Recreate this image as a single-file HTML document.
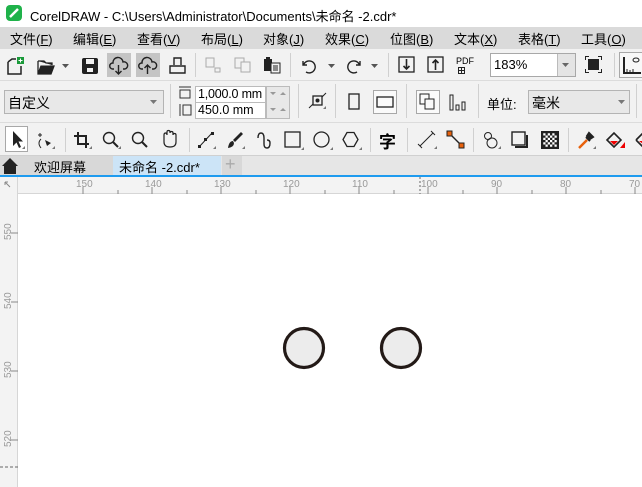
<!DOCTYPE html>
<html><head><meta charset="utf-8"><style>
*{margin:0;padding:0;box-sizing:border-box}
body{width:642px;height:487px;overflow:hidden;background:#fff;font-family:"Liberation Sans","Noto Sans CJK SC",sans-serif;font-size:13px;color:#000;position:relative}
.a{position:absolute}
.sep{position:absolute;width:1px;background:#d0d0d0}
.m{position:absolute;top:29px;font-size:13px}
svg{position:absolute;overflow:visible}
.hl{position:absolute;background:#c4c4c4}
.bx{position:absolute;border:1px solid #a8a8a8;background:#fff}
</style></head><body>
<!-- title -->
<div class="a" style="left:0;top:0;width:642px;height:27px;background:#fff"></div>
<svg style="left:6px;top:5px" width="16" height="16"><rect x="0" y="0" width="16" height="16" rx="4" fill="#1fb24a"/><path d="M4 12 L12 4" stroke="#fff" stroke-width="2.5"/></svg>
<div class="a" style="left:30px;top:6px;font-size:13px">CorelDRAW - C:\Users\Administrator\Documents\未命名 -2.cdr*</div>
<!-- menu -->
<div class="a" style="left:0;top:27px;width:642px;height:22px;background:#dadada"></div>
<div class="m" style="left:10px">文件(<u>F</u>)</div>
<div class="m" style="left:73px">编辑(<u>E</u>)</div>
<div class="m" style="left:137px">查看(<u>V</u>)</div>
<div class="m" style="left:201px">布局(<u>L</u>)</div>
<div class="m" style="left:263px">对象(<u>J</u>)</div>
<div class="m" style="left:325px">效果(<u>C</u>)</div>
<div class="m" style="left:390px">位图(<u>B</u>)</div>
<div class="m" style="left:454px">文本(<u>X</u>)</div>
<div class="m" style="left:518px">表格(<u>T</u>)</div>
<div class="m" style="left:581px">工具(<u>O</u>)</div>
<!-- toolbars bg -->
<div class="a" style="left:0;top:49px;width:642px;height:107px;background:#f2f2f2"></div>
<div class="a" style="left:0;top:80px;width:642px;height:1px;background:#dcdcdc"></div>
<div class="a" style="left:0;top:122px;width:642px;height:1px;background:#dcdcdc"></div>
<div class="a" style="left:0;top:155px;width:642px;height:1px;background:#d0d0d0"></div>
<!-- toolbar 1 -->
<div class="hl" style="left:107px;top:53px;width:24px;height:24px"></div>
<div class="hl" style="left:136px;top:53px;width:24px;height:24px"></div>
<svg style="left:7px;top:57px" width="18" height="18"><path d="M1 5 L5 2 H9 M1 5 V17 H14 V9" fill="none" stroke="#222" stroke-width="1.5"/><rect x="10" y="0" width="7" height="7" fill="#1a9a3a"/><path d="M13.5 1.5v4M11.5 3.5h4" stroke="#fff"/></svg>
<svg style="left:37px;top:59px" width="20" height="16"><path d="M1 2 H7 L9 4 H15 V6 M1 2 V15 H14 L17 7 H4 L1 15" fill="#222" stroke="#222" stroke-width="1.3"/><path d="M3 6 H13" stroke="#f2f2f2"/></svg>
<svg style="left:62px;top:64px" width="8" height="5"><path d="M0 0H7L3.5 4Z" fill="#555"/></svg>
<svg style="left:82px;top:58px" width="17" height="16"><rect x="0" y="0" width="16" height="16" rx="2" fill="#222"/><rect x="4" y="1" width="8" height="5" fill="#f2f2f2"/><rect x="5" y="10" width="6" height="4" fill="#f2f2f2"/></svg>
<svg style="left:110px;top:57px" width="18" height="18"><path d="M4 12 H2.5 A3 3 0 0 1 3 6 A5 5 0 0 1 13 5 A3.5 3.5 0 0 1 15 12 H13" fill="none" stroke="#222" stroke-width="1.4"/><path d="M8.5 8 V17 M5.5 14 L8.5 17 L11.5 14" fill="none" stroke="#222" stroke-width="1.4"/></svg>
<svg style="left:139px;top:57px" width="18" height="18"><path d="M4 12 H2.5 A3 3 0 0 1 3 6 A5 5 0 0 1 13 5 A3.5 3.5 0 0 1 15 12 H13" fill="none" stroke="#222" stroke-width="1.4"/><path d="M8.5 17 V8 M5.5 11 L8.5 8 L11.5 11" fill="none" stroke="#222" stroke-width="1.4"/></svg>
<svg style="left:169px;top:57px" width="18" height="18"><path d="M5 8 V1 H12 V8 M1 16 V9 H16 V16 Z" fill="none" stroke="#222" stroke-width="1.4"/></svg>
<div class="sep" style="left:195px;top:53px;height:24px"></div>
<svg style="left:205px;top:57px" width="16" height="16"><rect x="1" y="1" width="8" height="9" fill="none" stroke="#aaa"/><rect x="10" y="11" width="5" height="4" fill="none" stroke="#aaa"/></svg>
<svg style="left:234px;top:57px" width="18" height="16"><rect x="1" y="1" width="9" height="10" fill="none" stroke="#aaa"/><rect x="7" y="5" width="9" height="10" fill="#f2f2f2" stroke="#aaa"/></svg>
<svg style="left:263px;top:56px" width="18" height="18"><rect x="1" y="3" width="8" height="12" fill="#222"/><rect x="3" y="1" width="4" height="3" fill="#222"/><rect x="8" y="7" width="9" height="10" fill="#f2f2f2" stroke="#222"/><path d="M10 10h5M10 12h5M10 14h5" stroke="#222"/></svg>
<div class="sep" style="left:290px;top:53px;height:24px"></div>
<svg style="left:300px;top:57px" width="18" height="18"><path d="M3 4 V8 H7 M3.5 8 A6 6 0 1 1 6 15" fill="none" stroke="#222" stroke-width="1.4"/></svg>
<svg style="left:328px;top:64px" width="8" height="5"><path d="M0 0H7L3.5 4Z" fill="#555"/></svg>
<svg style="left:345px;top:57px" width="18" height="18"><path d="M15 4 V8 H11 M14.5 8 A6 6 0 1 0 12 15" fill="none" stroke="#222" stroke-width="1.4"/></svg>
<svg style="left:371px;top:64px" width="8" height="5"><path d="M0 0H7L3.5 4Z" fill="#555"/></svg>
<div class="sep" style="left:388px;top:53px;height:24px"></div>
<svg style="left:398px;top:56px" width="18" height="18"><rect x="1" y="1" width="15" height="15" fill="none" stroke="#222" stroke-width="1.3"/><path d="M8.5 3V13M5.5 10L8.5 13L11.5 10" fill="none" stroke="#222" stroke-width="1.6"/></svg>
<svg style="left:427px;top:56px" width="18" height="18"><rect x="1" y="1" width="15" height="15" fill="none" stroke="#222" stroke-width="1.3"/><path d="M8.5 14V4M5.5 7L8.5 4L11.5 7" fill="none" stroke="#222" stroke-width="1.6"/></svg>
<div class="a" style="left:456px;top:57px;font-size:9px;line-height:9px">PDF</div>
<svg style="left:458px;top:67px" width="8" height="8"><rect x="0.5" y="0.5" width="6" height="6" fill="none" stroke="#222"/><path d="M3.5 1v5M1 3.5h5" stroke="#222"/></svg>
<div class="bx" style="left:490px;top:53px;width:86px;height:24px"></div>
<div class="a" style="left:557px;top:54px;width:18px;height:22px;background:#e4e4e4;border-left:1px solid #bbb"></div>
<svg style="left:562px;top:63px" width="8" height="5"><path d="M0 0H7L3.5 4Z" fill="#666"/></svg>
<div class="a" style="left:494px;top:57px;font-size:13px">183%</div>
<svg style="left:585px;top:56px" width="18" height="18"><rect x="3" y="3" width="11" height="11" fill="#222"/><path d="M0.5 4V0.5H4M13 0.5H16.5V4M16.5 13V16.5H13M4 16.5H0.5V13" fill="none" stroke="#222"/></svg>
<div class="sep" style="left:614px;top:53px;height:24px"></div>
<div class="bx" style="left:619px;top:52px;width:26px;height:26px;background:#f8f8f8"></div>
<svg style="left:623px;top:56px" width="18" height="18"><path d="M1 1V17H18" fill="none" stroke="#222" stroke-width="2"/><path d="M4 16V13M7 16V14M10 16V13" stroke="#222"/><ellipse cx="13" cy="4" rx="3" ry="2" fill="none" stroke="#222"/></svg>
<!-- toolbar 2 -->
<div class="a" style="left:4px;top:90px;width:160px;height:24px;background:#e8e8e8;border:1px solid #b4b4b4"></div>
<div class="a" style="left:8px;top:93px;font-size:14px">自定义</div>
<svg style="left:150px;top:100px" width="8" height="5"><path d="M0 0H7L3.5 4Z" fill="#777"/></svg>
<div class="sep" style="left:170px;top:84px;height:34px"></div>
<svg style="left:178px;top:86px" width="14" height="32"><path d="M1 1H13M2 4H12V12H2Z" fill="none" stroke="#333"/><path d="M2 18V30M5 19H13V29H5Z" fill="none" stroke="#333"/></svg>
<div class="bx" style="left:195px;top:86px;width:71px;height:17px;border-color:#bbb"></div>
<div class="bx" style="left:195px;top:102px;width:71px;height:17px;border-color:#bbb"></div>
<div class="a" style="left:266px;top:86px;width:24px;height:33px;background:#e8e8e8;border:1px solid #bbb"></div>
<div class="a" style="left:198px;top:87px;font-size:12.5px;letter-spacing:-0.2px">1,000.0 mm</div>
<div class="a" style="left:198px;top:103px;font-size:12.5px">450.0 mm</div>
<svg style="left:270px;top:92px" width="20" height="24"><path d="M0 0H6L3 3Z M10 3H16L13 0Z M0 16H6L3 19Z M10 19H16L13 16Z" fill="#999"/></svg>
<div class="sep" style="left:298px;top:84px;height:34px"></div>
<svg style="left:309px;top:92px" width="20" height="20"><rect x="4" y="4" width="9" height="9" fill="none" stroke="#222" stroke-width="1.3"/><circle cx="8.5" cy="8.5" r="2" fill="#222"/><path d="M0 16L4 12M13 5L17 1" stroke="#222"/><path d="M14 17H17V14Z" fill="#777"/></svg>
<div class="sep" style="left:335px;top:84px;height:34px"></div>
<svg style="left:348px;top:93px" width="14" height="18"><rect x="1" y="1" width="10" height="15" fill="none" stroke="#222" stroke-width="1.3"/></svg>
<div class="bx" style="left:373px;top:90px;width:24px;height:24px;background:#fafafa"></div>
<svg style="left:376px;top:96px" width="18" height="13"><rect x="1" y="1" width="16" height="10" fill="none" stroke="#222" stroke-width="1.3"/></svg>
<div class="sep" style="left:406px;top:84px;height:34px"></div>
<div class="bx" style="left:416px;top:90px;width:24px;height:24px;background:#fafafa"></div>
<svg style="left:419px;top:93px" width="18" height="18"><rect x="1" y="1" width="9" height="10" fill="#fafafa" stroke="#222"/><rect x="6" y="6" width="9" height="10" fill="#fafafa" stroke="#222"/></svg>
<svg style="left:449px;top:94px" width="18" height="18"><rect x="1" y="1" width="3" height="15" fill="none" stroke="#222"/><rect x="7" y="11" width="3" height="5" fill="none" stroke="#222"/><rect x="13" y="8" width="3" height="8" fill="none" stroke="#222"/></svg>
<div class="sep" style="left:478px;top:84px;height:34px"></div>
<div class="a" style="left:487px;top:94px;font-size:13px">单位:</div>
<div class="a" style="left:528px;top:90px;width:102px;height:24px;background:#e8e8e8;border:1px solid #b4b4b4"></div>
<div class="a" style="left:532px;top:93px;font-size:14px">毫米</div>
<svg style="left:618px;top:100px" width="8" height="5"><path d="M0 0H7L3.5 4Z" fill="#777"/></svg>
<div class="sep" style="left:636px;top:84px;height:34px"></div>
<!-- toolbox -->
<div class="bx" style="left:5px;top:126px;width:23px;height:26px;background:#fff"></div>
<svg style="left:10px;top:130px" width="16" height="20"><path d="M3 1V16L6.5 12.5L9 18L11 17L8.5 11.5H13Z" fill="#222"/><path d="M12 19H15V16Z" fill="#777"/></svg>
<svg style="left:36px;top:131px" width="20" height="20"><path d="M4 2V6M2 4H6M5 8Q1 12 5 17" fill="none" stroke="#222"/><path d="M9 9L15 12L11 15Z" fill="#222"/><path d="M16 18H19V15Z" fill="#777"/></svg>
<div class="sep" style="left:65px;top:128px;height:24px"></div>
<svg style="left:73px;top:131px" width="20" height="20"><path d="M5 1V13H16M1 5H13V17" fill="none" stroke="#222" stroke-width="2"/><path d="M16 18H19V15Z" fill="#777"/></svg>
<svg style="left:102px;top:131px" width="20" height="20"><circle cx="7" cy="7" r="5.5" fill="none" stroke="#222" stroke-width="1.4"/><path d="M11 11L16 16" stroke="#222" stroke-width="2"/><path d="M16 18H19V15Z" fill="#777"/></svg>
<svg style="left:131px;top:131px" width="20" height="20"><circle cx="7" cy="7" r="5.5" fill="none" stroke="#222" stroke-width="1.4"/><path d="M11 11L16 16" stroke="#222" stroke-width="2"/></svg>
<svg style="left:160px;top:130px" width="20" height="20"><path d="M4 12V5Q4 3 5.5 3T7 5V2Q7 0.5 8.5 0.5T10 2V3Q10 1.5 11.5 1.5T13 3V5Q13 3.5 14.5 3.5T16 5V12Q16 17 10 17T4 12Z" fill="none" stroke="#222" stroke-width="1.2"/></svg>
<div class="sep" style="left:189px;top:128px;height:24px"></div>
<svg style="left:197px;top:131px" width="20" height="20"><path d="M2 16L15 2" stroke="#222"/><rect x="1" y="14" width="3" height="3" fill="#222"/><rect x="7" y="7" width="3" height="3" fill="#222"/><rect x="14" y="1" width="3" height="3" fill="#222"/><path d="M16 18H19V15Z" fill="#777"/></svg>
<svg style="left:226px;top:131px" width="20" height="20"><path d="M15 1L17 3L9 11L7 9Z" fill="#222"/><path d="M7 10Q3 10 2 17Q8 16 8 12Z" fill="#222"/><path d="M16 18H19V15Z" fill="#777"/></svg>
<svg style="left:255px;top:131px" width="20" height="20"><path d="M3 7Q3 2 6 2T9 7V13Q9 17 12 17T15 12Q15 9 12 9" fill="none" stroke="#222" stroke-width="1.4"/></svg>
<svg style="left:284px;top:131px" width="20" height="20"><rect x="1" y="1" width="15" height="15" fill="none" stroke="#222" stroke-width="1.3"/><path d="M17 19H20V16Z" fill="#777"/></svg>
<svg style="left:313px;top:131px" width="20" height="20"><circle cx="8.5" cy="8.5" r="7.5" fill="none" stroke="#222" stroke-width="1.3"/><path d="M17 19H20V16Z" fill="#777"/></svg>
<svg style="left:342px;top:131px" width="20" height="20"><path d="M5 1.5H12L16 8.5L12 15.5H5L1 8.5Z" fill="none" stroke="#222" stroke-width="1.3"/><path d="M17 19H20V16Z" fill="#777"/></svg>
<div class="sep" style="left:370px;top:128px;height:24px"></div>
<div class="a" style="left:379px;top:128px;font-size:17px;font-weight:bold">字</div>
<div class="sep" style="left:407px;top:128px;height:24px"></div>
<svg style="left:418px;top:131px" width="20" height="20"><path d="M2 15L15 2M0 13L4 17M13 0L17 4" stroke="#222"/><path d="M16 18H19V15Z" fill="#777"/></svg>
<svg style="left:447px;top:131px" width="20" height="20"><path d="M3 3L14 14" stroke="#222" stroke-width="1.4"/><rect x="0" y="0" width="5" height="5" fill="#e8610c" stroke="#222"/><rect x="12" y="12" width="5" height="5" fill="#e8610c" stroke="#222"/></svg>
<div class="sep" style="left:473px;top:128px;height:24px"></div>
<svg style="left:482px;top:131px" width="20" height="20"><circle cx="6" cy="5" r="3.5" fill="none" stroke="#222"/><circle cx="10" cy="12" r="5" fill="none" stroke="#222"/><path d="M16 18H19V15Z" fill="#777"/></svg>
<svg style="left:511px;top:131px" width="20" height="20"><rect x="1" y="1" width="13" height="13" fill="none" stroke="#222" stroke-width="1.4"/><path d="M16 4V16H4" fill="none" stroke="#222" stroke-width="2"/></svg>
<svg style="left:541px;top:131px" width="18" height="18" viewBox="0 0 16 16"><rect x="0" y="0" width="16" height="16" fill="#222"/><path d="M2 2h2v2H2zM6 2h2v2H6zM10 2h2v2h-2zM4 4h2v2H4zM8 4h2v2H8zM12 4h2v2h-2zM2 6h2v2H2zM6 6h2v2H6zM10 6h2v2h-2zM4 8h2v2H4zM8 8h2v2H8zM12 8h2v2h-2zM2 10h2v2H2zM6 10h2v2H6zM10 10h2v2h-2zM4 12h2v2H4zM8 12h2v2H8zM12 12h2v2h-2z" fill="#fff"/></svg>
<div class="sep" style="left:568px;top:128px;height:24px"></div>
<svg style="left:577px;top:131px" width="20" height="20"><path d="M2 17L10 9" stroke="#e8610c" stroke-width="2.5"/><path d="M9 6L13 10M12 2L16 6L13 8L10 5Z" stroke="#222" stroke-width="2" fill="#222"/><path d="M16 18H19V15Z" fill="#777"/></svg>
<svg style="left:606px;top:131px" width="20" height="20"><path d="M1 9L8 2L15 9L8 16Z" fill="none" stroke="#222" stroke-width="1.6"/><path d="M4 10H12L8 14Z" fill="#e00"/><path d="M14 17H19V11Z" fill="#e00"/></svg>
<svg style="left:635px;top:131px" width="10" height="20"><path d="M1 9L8 2M1 9L8 16" fill="none" stroke="#222" stroke-width="1.6"/><path d="M4 10H8V13Z" fill="#e00"/></svg>
<!-- tabs -->
<div class="a" style="left:0;top:156px;width:642px;height:19px;background:#e6e6e6"></div>
<div class="a" style="left:0;top:156px;width:113px;height:19px;background:#d8d8d8"></div>
<svg style="left:1px;top:157px" width="18" height="17"><path d="M9 1L17 9H15V17H3V9H1Z" fill="#222"/></svg>
<div class="a" style="left:34px;top:157px;font-size:13px">欢迎屏幕</div>
<div class="a" style="left:113px;top:156px;width:108px;height:19px;background:#cce4f7"></div>
<div class="a" style="left:119px;top:157px;font-size:13px">未命名 -2.cdr*</div>
<div class="a" style="left:222px;top:156px;width:20px;height:19px;background:#d8d8d8"></div>
<div class="a" style="left:225px;top:154px;font-size:18px;color:#aaa">+</div>
<div class="a" style="left:0;top:175px;width:642px;height:2px;background:#1e9bef"></div>
<!-- rulers -->
<div class="a" style="left:0;top:177px;width:642px;height:17px;background:#f3f3f3;border-bottom:1px solid #d6d6d6"></div>
<div class="a" style="left:0;top:177px;width:18px;height:310px;background:#f3f3f3;border-right:1px solid #d6d6d6"></div>
<svg style="left:0;top:177px" width="642" height="17">
<g fill="#999" font-family="Liberation Sans" font-size="10">
<text x="76" y="10">150</text><text x="145" y="10">140</text><text x="214" y="10">130</text><text x="283" y="10">120</text><text x="352" y="10">110</text><text x="421" y="10">100</text><text x="491" y="10">90</text><text x="560" y="10">80</text><text x="629" y="10">70</text>
</g>
<g stroke="#888">
<path d="M83 10V17M152 10V17M221 10V17M290 10V17M359 10V17M428 10V17M497 10V17M566 10V17M635 10V17"/>
<path d="M118 13V17M187 13V17M256 13V17M325 13V17M394 13V17M463 13V17M532 13V17M601 13V17"/>
</g>
<path d="M420 0V17" stroke="#666" stroke-dasharray="2 2"/>
<path d="M5 5L10 10M5 5H8M5 5V8" stroke="#888"/>
</svg>
<svg style="left:0;top:194px" width="18" height="293">
<g fill="#999" font-family="Liberation Sans" font-size="10">
<text transform="translate(11,46) rotate(-90)">550</text><text transform="translate(11,115) rotate(-90)">540</text><text transform="translate(11,184) rotate(-90)">530</text><text transform="translate(11,253) rotate(-90)">520</text>
</g>
<path d="M11 39H18M11 108H18M11 177H18M11 246H18" stroke="#888"/>
<path d="M0 273H18" stroke="#666" stroke-dasharray="3 2"/>
</svg>
<!-- circles -->
<svg style="left:0;top:0" width="642" height="487"><circle cx="304" cy="348" r="19.5" fill="#ececec" stroke="#231a17" stroke-width="3.2"/><circle cx="401" cy="348" r="19.5" fill="#ececec" stroke="#231a17" stroke-width="3.2"/></svg>
</body></html>
